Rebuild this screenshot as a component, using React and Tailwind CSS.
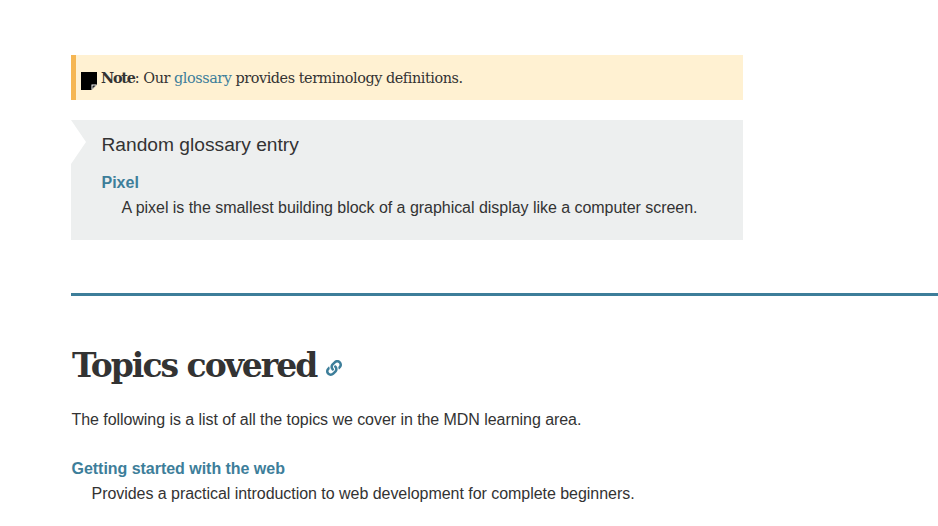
import React from "react";
import { FaLink } from "react-icons/fa";

function NoteIcon() {
  return (
    <svg viewBox="0 0 16 18" className="w-4 h-[18px] absolute left-[5px] top-[17px]">
      <path d="M0 0h16v12.5L10.5 18H0z" fill="#000" />
      <path d="M10.5 18v-5.5H16z" fill="#fff" />
      <path d="M11.5 16.8v-3.3h3.2l-1.3 1.3h-0.9v0.9z" fill="#000" />
    </svg>
  );
}

export default function App() {
  return (
    <div className="w-[938px] h-[526px] overflow-hidden bg-white text-[#333] font-['Liberation_Sans',Arial,sans-serif] pt-[55px]">
      <div className="relative ml-[71px] w-[672px] h-[45px] bg-[#fff1d2] border-l-[5px] border-[#f5b653] pl-[25px] flex items-center">
        <NoteIcon />
        <p className="font-['DejaVu_Serif',serif] text-[14.4px] tracking-[-0.44px] leading-[24px] whitespace-nowrap text-[#333]">
          <strong className="font-bold tracking-[-1.2px]">Note</strong>: Our <a className="text-[#3d7e9a]">glossary</a> provides terminology definitions.
        </p>
      </div>

      <div className="relative ml-[71px] mt-[20px] w-[672px] h-[120px] bg-[#edefef] pl-[30.5px] pt-[13px]">
        <div className="absolute left-0 top-0 w-0 h-0 border-y-[22.5px] border-y-transparent border-l-[15px] border-l-white" />
        <h3 className="text-[19.2px] leading-[24px] font-normal">Random glossary entry</h3>
        <dl className="mt-[14px]">
          <dt className="text-[16px] leading-[24px] font-bold text-[#3d7e9a]">Pixel</dt>
          <dd className="ml-5 text-[16px] leading-[24px] mt-px tracking-[-0.035px]">A pixel is the smallest building block of a graphical display like a computer screen.</dd>
        </dl>
      </div>

      <hr className="mt-[53px] ml-[71px] h-[3px] border-0 bg-[#3d7e9a]" />

      <div className="ml-[72px] mt-[45px] flex items-start">
        <h2 className="font-['DejaVu_Serif',serif] font-bold text-[33px] leading-[50px] tracking-[-2px] text-[#333] whitespace-nowrap">Topics covered</h2>
        <FaLink className="w-4 h-4 ml-[10px] mt-[19px] shrink-0 text-[#3d7e9a]" />
      </div>

      <p className="ml-[71.5px] mt-[17px] text-[16px] leading-[24px] tracking-[-0.055px]">The following is a list of all the topics we cover in the MDN learning area.</p>

      <dl className="ml-[71.5px] mt-[25px]">
        <dt className="text-[16px] leading-[24px] font-bold text-[#3d7e9a] tracking-[-0.03px]">Getting started with the web</dt>
        <dd className="ml-5 text-[16px] leading-[24px] mt-px tracking-[-0.04px]">Provides a practical introduction to web development for complete beginners.</dd>
      </dl>
    </div>
  );
}
